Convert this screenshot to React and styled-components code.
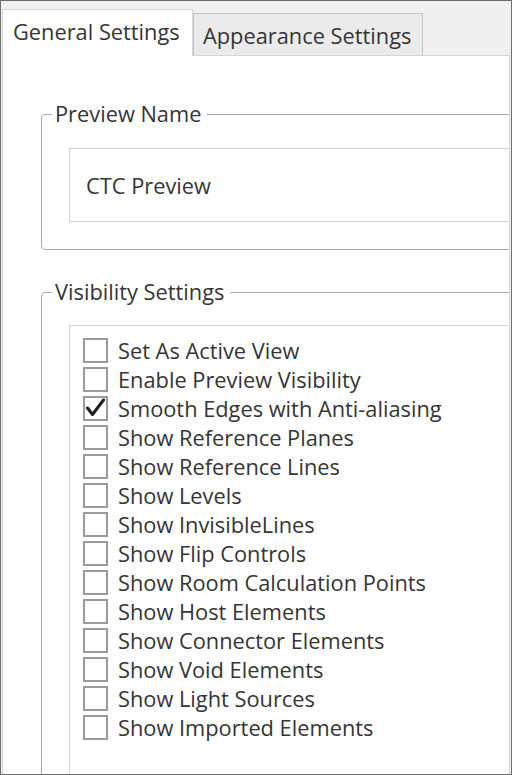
import React from "react";
import styled, { createGlobalStyle } from "styled-components";

const GlobalStyle = createGlobalStyle`
  html, body {
    margin: 0;
    padding: 0;
    background: #ffffff;
  }
  body {
    font-family: "Open Sans", "Noto Sans", sans-serif;
    color: #353535;
  }
`;

const Frame = styled.div`
  width: 512px;
  height: 775px;
  box-sizing: border-box;
  border: 1px solid #6e6e6e;
  background: #f0f0f0;
  padding: 0 1px;
  display: flex;
  flex-direction: column;
  overflow: hidden;
`;

const TabStrip = styled.div`
  display: flex;
  align-items: flex-end;
  height: 54px;
  flex-shrink: 0;
`;

const Tab = styled.div`
  box-sizing: border-box;
  display: flex;
  align-items: center;
  font-size: 21.8px;
  color: #353535;
  white-space: nowrap;
  overflow: hidden;
  border: 1px solid ${(p) => (p.$active ? "#d6d6d6" : "#c4c4c4")};
  border-bottom: none;
  background: ${(p) => (p.$active ? "#ffffff" : "#ebebeb")};
  height: ${(p) => (p.$active ? "47px" : "42px")};
  padding: ${(p) => (p.$active ? "0 0 3px 10px" : "2px 0 0 9px")};
  width: ${(p) => (p.$active ? "191px" : "230px")};
  margin-bottom: ${(p) => (p.$active ? "-1px" : "0")};
  position: relative;
  z-index: ${(p) => (p.$active ? 1 : 0)};
`;

const Panel = styled.div`
  flex: 1;
  min-height: 0;
  background: #ffffff;
  border: 1px solid #d6d6d6;
  border-bottom: none;
  overflow: hidden;
  padding-left: 38px;
`;

const Group = styled.fieldset`
  margin: ${(p) => (p.$first ? "46px" : "30px")} 0 0 0;
  padding: 0;
  width: 640px;
  min-width: 0;
  border: 1px solid #a9a9a9;
  border-radius: 4px;
`;

const Legend = styled.legend`
  margin-left: 10px;
  padding: 0 6px 0 3px;
  font-size: 21.8px;
  line-height: 24px;
  color: #353535;
`;

const TextBox = styled.div`
  box-sizing: border-box;
  margin: 22px 0 27px 27px;
  height: 74px;
  border: 1px solid #d4d4d4;
  display: flex;
  align-items: center;
  padding-left: 16px;
  font-size: 21.8px;
  color: #353535;
`;

const List = styled.div`
  margin: 21px 0 0 27px;
  height: 520px;
  border: 1px solid #d8d8d8;
  padding: 12px 0 0 13px;
  display: flex;
  flex-direction: column;
  gap: 4px;
`;

const Row = styled.div`
  display: flex;
  align-items: center;
  gap: 10px;
  height: 25px;
  font-size: 21.8px;
  color: #353535;
  white-space: nowrap;
`;

const Box = styled.span`
  box-sizing: border-box;
  width: 25px;
  height: 25px;
  border: 2px solid #9b9b9b;
  background: #ffffff;
  display: flex;
  align-items: center;
  justify-content: center;
  flex-shrink: 0;
`;

const items = [
  ["Set As Active View", false],
  ["Enable Preview Visibility", false],
  ["Smooth Edges with Anti-aliasing", true],
  ["Show Reference Planes", false],
  ["Show Reference Lines", false],
  ["Show Levels", false],
  ["Show InvisibleLines", false],
  ["Show Flip Controls", false],
  ["Show Room Calculation Points", false],
  ["Show Host Elements", false],
  ["Show Connector Elements", false],
  ["Show Void Elements", false],
  ["Show Light Sources", false],
  ["Show Imported Elements", false],
];

function Check() {
  return (
    <svg width="21" height="21" viewBox="0 0 21 21">
      <path
        d="M2.5 10 L7.5 16.5 L18.5 2"
        fill="none"
        stroke="#1e1e1e"
        strokeWidth="3"
        strokeLinecap="round"
        strokeLinejoin="round"
      />
    </svg>
  );
}

export default function App() {
  return (
    <>
      <GlobalStyle />
      <Frame>
        <TabStrip>
          <Tab $active>General Settings</Tab>
          <Tab>Appearance Settings</Tab>
        </TabStrip>
        <Panel>
          <Group $first>
            <Legend>Preview Name</Legend>
            <TextBox>CTC Preview</TextBox>
          </Group>
          <Group>
            <Legend>Visibility Settings</Legend>
            <List>
              {items.map(([label, checked]) => (
                <Row key={label}>
                  <Box>{checked && <Check />}</Box>
                  {label}
                </Row>
              ))}
            </List>
          </Group>
        </Panel>
      </Frame>
    </>
  );
}
